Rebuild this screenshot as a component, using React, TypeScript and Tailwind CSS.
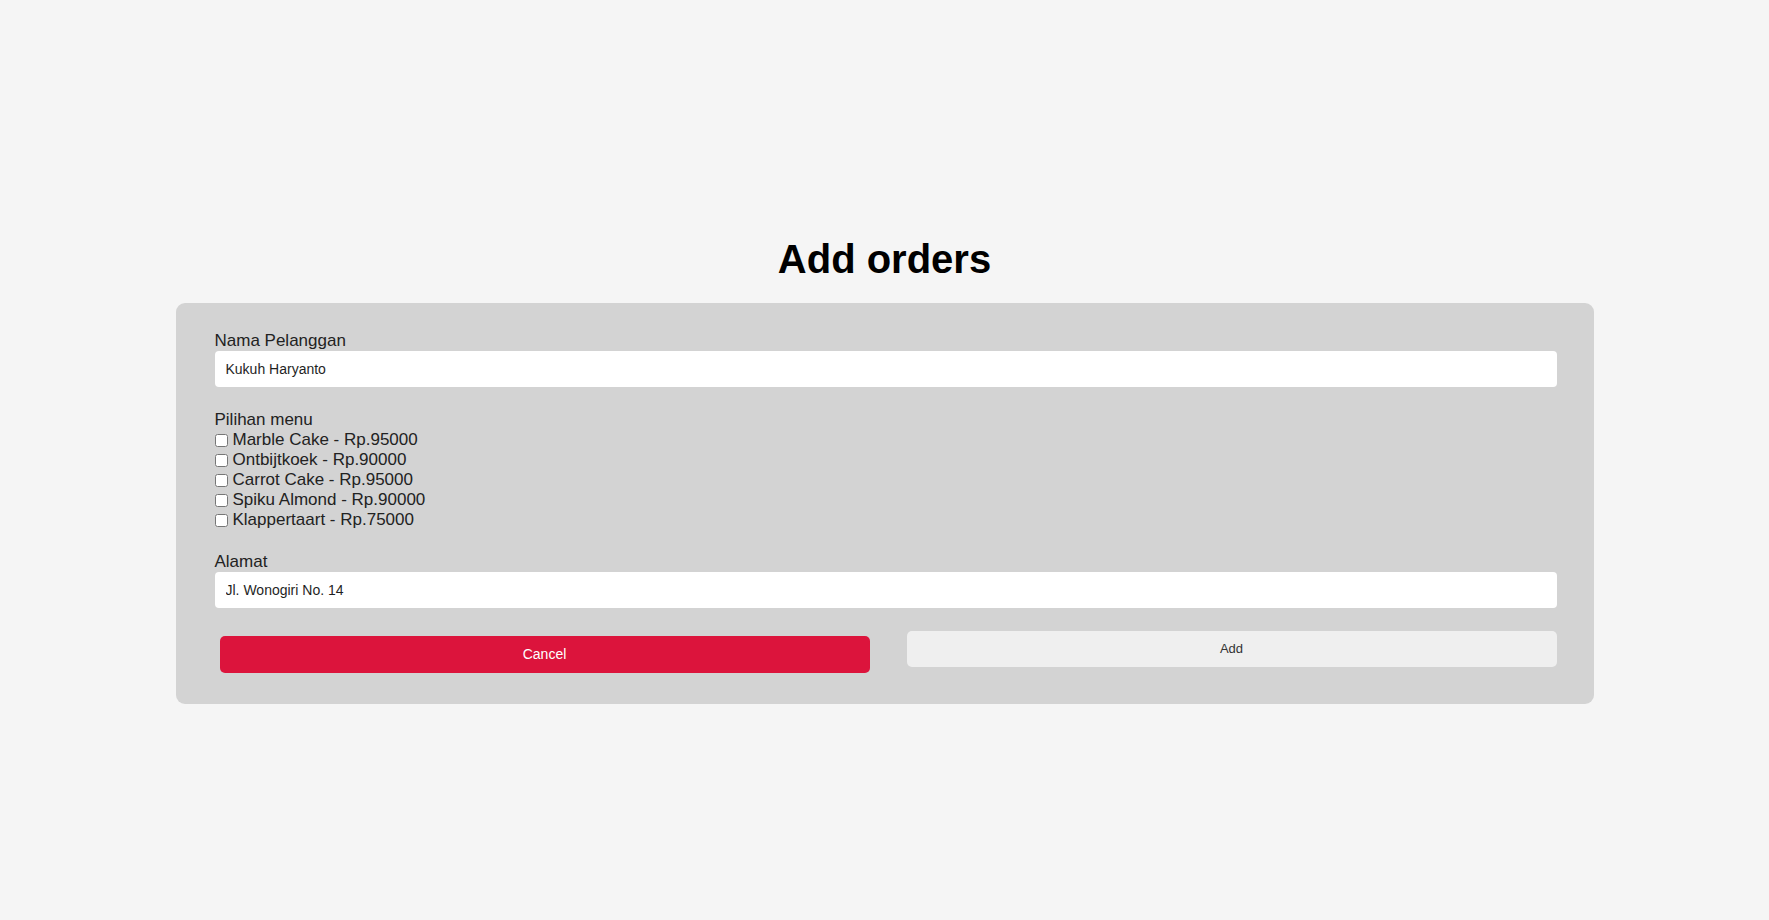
import React from 'react'

const menu = [
  { name: 'Marble Cake', price: 95000 },
  { name: 'Ontbijtkoek', price: 90000 },
  { name: 'Carrot Cake', price: 95000 },
  { name: 'Spiku Almond', price: 90000 },
  { name: 'Klappertaart', price: 75000 },
]

function TextField({ label, value, className = '' }: { label: string; value: string; className?: string }) {
  return (
    <div className={`flex flex-col ${className}`}>
      <label className="text-[17px] leading-[20px] text-[#222]">{label}</label>
      <input
        type="text"
        defaultValue={value}
        className="h-[36px] w-full rounded-[4px] bg-white px-[11px] text-[14px] text-[#1f1f1f] outline-none"
      />
    </div>
  )
}

export default function App() {
  return (
    <div className="min-h-screen bg-[#f5f5f5] pt-[236px] font-['Liberation_Sans',Arial,sans-serif]">
      <h1 className="mb-[21px] text-center text-[40px] font-bold leading-[46px] text-black">Add orders</h1>

      <form
        className="mx-auto w-[1418px] rounded-[9px] bg-[#d3d3d3] pb-[31px] pl-[39px] pr-[37px] pt-[28px]"
        onSubmit={(e) => e.preventDefault()}
      >
        <TextField label="Nama Pelanggan" value="Kukuh Haryanto" className="mb-[22px]" />

        <div className="mb-[22px] flex flex-col">
          <span className="text-[17px] leading-[21px] text-[#222]">Pilihan menu</span>
          {menu.map((item) => (
            <label key={item.name} className="flex h-[20px] items-center text-[17px] leading-[20px] text-[#222]">
              <input type="checkbox" className="m-0 mr-[5px] h-[13px] w-[13px]" />
              {item.name} - Rp.{item.price}
            </label>
          ))}
        </div>

        <TextField label="Alamat" value="Jl. Wonogiri No. 14" className="mb-[23px]" />

        <div className="flex items-start justify-between">
          <button
            type="button"
            className="ml-[5px] mt-[5px] h-[37px] w-[650px] rounded-[5px] bg-[#dc143c] text-[14px] text-white"
          >
            Cancel
          </button>
          <button type="submit" className="h-[36px] w-[650px] rounded-[5px] bg-[#efefef] text-[13px] text-[#333]">
            Add
          </button>
        </div>
      </form>
    </div>
  )
}
